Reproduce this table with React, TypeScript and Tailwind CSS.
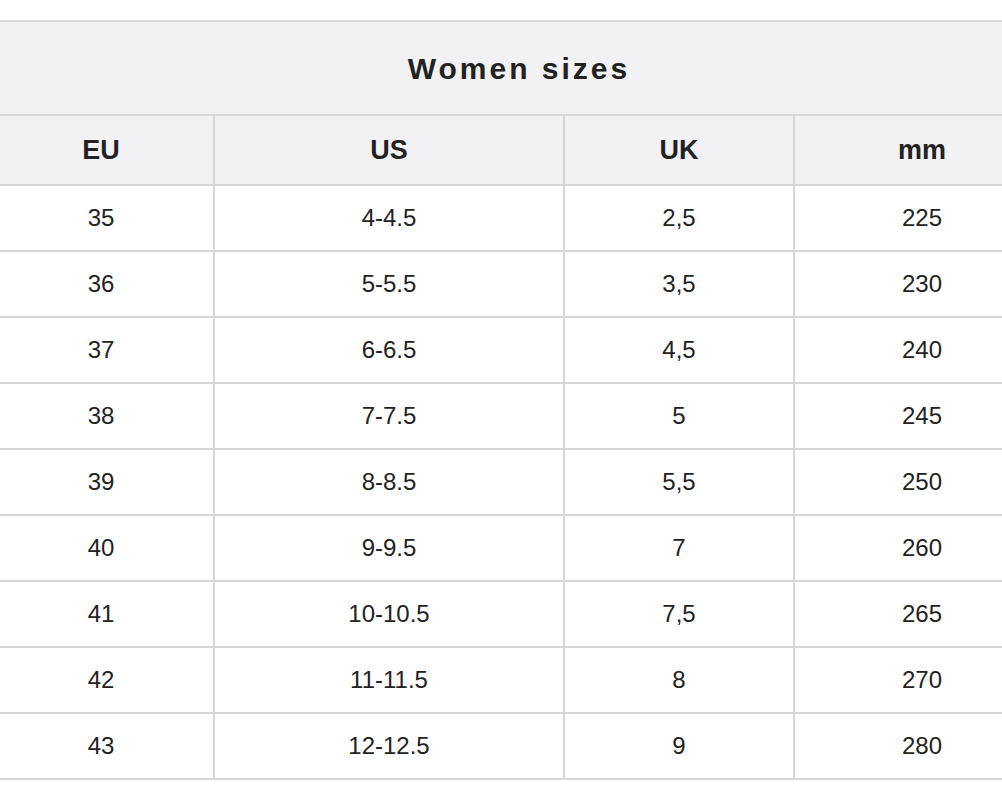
import React from "react";

const rows = [
  ["35", "4-4.5", "2,5", "225"],
  ["36", "5-5.5", "3,5", "230"],
  ["37", "6-6.5", "4,5", "240"],
  ["38", "7-7.5", "5", "245"],
  ["39", "8-8.5", "5,5", "250"],
  ["40", "9-9.5", "7", "260"],
  ["41", "10-10.5", "7,5", "265"],
  ["42", "11-11.5", "8", "270"],
  ["43", "12-12.5", "9", "280"],
];

const headers = ["EU", "US", "UK", "mm"];

export default function App() {
  return (
    <div className="w-full min-h-[806px] bg-white pt-5 overflow-hidden text-[#222] font-['Liberation_Sans',Arial,sans-serif]">
      <div className="-ml-[11px] w-[1060px] border-t-2 border-[#d6d6d6]">
        {/* Title */}
        <div className="h-[94px] border-b-2 border-[#d6d6d6] bg-[#f2f2f4] flex items-center justify-center">
          <h2 className="text-[30px] font-bold tracking-[3px]">Women sizes</h2>
        </div>

        {/* Column headers */}
        <div className="grid grid-cols-[226px_350px_230px_254px] h-[70px] border-b-2 border-[#d6d6d6] bg-[#f2f2f4]">
          {headers.map((h, i) => (
            <div
              key={h}
              className={`flex items-center justify-center text-[27px] font-bold ${i < 3 ? "border-r-2 border-[#d6d6d6]" : ""}`}
            >
              {h}
            </div>
          ))}
        </div>

        {/* Body rows */}
        {rows.map((r) => (
          <div
            key={r[0]}
            className="grid grid-cols-[226px_350px_230px_254px] h-[66px] border-b-2 border-[#d6d6d6]"
          >
            {r.map((c, i) => (
              <div
                key={i}
                className={`flex items-center justify-center text-[24px] ${i < 3 ? "border-r-2 border-[#d6d6d6]" : ""}`}
              >
                {c}
              </div>
            ))}
          </div>
        ))}
      </div>
    </div>
  );
}
